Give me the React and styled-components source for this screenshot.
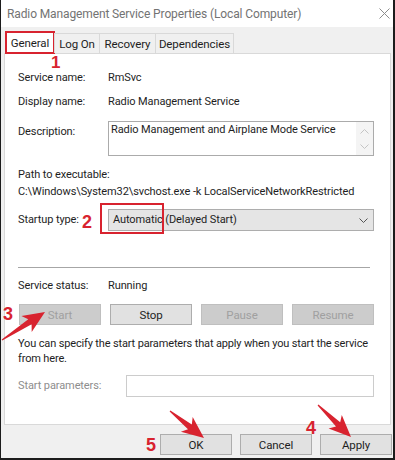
import React from "react";
import styled, { createGlobalStyle } from "styled-components";

const RED = "#d8232f";
const UI_FONT = `Roboto, "Liberation Sans", Arial, sans-serif`;

const GlobalStyle = createGlobalStyle`
  html, body {
    margin: 0;
    padding: 0;
    background: #fff;
  }
  body {
    font-family: ${UI_FONT};
  }
  * {
    box-sizing: border-box;
  }
`;

const tabs = [
  { name: "General", w: 50, selected: true },
  { name: "Log On", w: 46 },
  { name: "Recovery", w: 57 },
  { name: "Dependencies", w: 79 },
];

const serviceButtons = [
  { name: "Start", disabled: true },
  { name: "Stop" },
  { name: "Pause", disabled: true },
  { name: "Resume", disabled: true },
];

// tail -> tip, drawn as a tapered shaft with a swept head
const arrowPoints = (x1, y1, x2, y2) => {
  const len = Math.hypot(x2 - x1, y2 - y1);
  const dx = (x2 - x1) / len;
  const dy = (y2 - y1) / len;
  const nx = -dy;
  const ny = dx;
  const head = 18;
  const neckX = x2 - dx * head;
  const neckY = y2 - dy * head;
  const barbX = x2 - dx * (head + 4);
  const barbY = y2 - dy * (head + 4);
  const pt = (x, y) => `${x.toFixed(1)},${y.toFixed(1)}`;
  return [
    pt(x1 + nx * 0.6, y1 + ny * 0.6),
    pt(neckX + nx * 3, neckY + ny * 3),
    pt(barbX + nx * 9.5, barbY + ny * 9.5),
    pt(x2, y2),
    pt(barbX - nx * 9.5, barbY - ny * 9.5),
    pt(neckX - nx * 3, neckY - ny * 3),
    pt(x1 - nx * 0.6, y1 - ny * 0.6),
  ].join(" ");
};

const arrows = [
  [2, 340, 45, 312],
  [170, 411, 204, 438],
  [318, 405, 351, 437],
];

const marks = [
  { n: "1", x: 51, y: 54, size: 17 },
  { n: "2", x: 82, y: 213, size: 18 },
  { n: "3", x: 3, y: 305, size: 18 },
  { n: "4", x: 306, y: 419, size: 18 },
  { n: "5", x: 146, y: 436, size: 18 },
];

const Chevron = ({ up, color = "#c4c4c4" }) => (
  <svg width="9" height="5" viewBox="0 0 9 5">
    <path
      d={up ? "M0.5 4.5 L4.5 0.5 L8.5 4.5" : "M0.5 0.5 L4.5 4.5 L8.5 0.5"}
      fill="none"
      stroke={color}
      strokeWidth="1"
    />
  </svg>
);

const App = () => {
  return (
    <>
      <GlobalStyle />
      <Window>
        <TitleBar>
          <Title>Radio Management Service Properties (Local Computer)</Title>
          <svg width="11" height="11" viewBox="0 0 11 11">
            <path d="M0.5 0.5 L10.5 10.5 M10.5 0.5 L0.5 10.5" stroke="#8c8c8c" strokeWidth="1" />
          </svg>
        </TitleBar>

        <Body>
          <TabStrip>
            {tabs.map((t) => (
              <Tab key={t.name} $w={t.w} $selected={t.selected}>
                {t.name}
              </Tab>
            ))}
          </TabStrip>

          <Panel>
            <Row>
              <Label>Service name:</Label>
              <Value>RmSvc</Value>
            </Row>
            <Row $mt={8}>
              <Label>Display name:</Label>
              <Value>Radio Management Service</Value>
            </Row>
            <Row $mt={11} $align="start">
              <Label $pt={3}>Description:</Label>
              <DescBox>
                <DescText>Radio Management and Airplane Mode Service</DescText>
                <ScrollBar>
                  <Chevron up />
                  <Chevron />
                </ScrollBar>
              </DescBox>
            </Row>

            <PathBlock>
              <div>Path to executable:</div>
              <div>C:\Windows\System32\svchost.exe -k LocalServiceNetworkRestricted</div>
            </PathBlock>

            <Row $mt={9}>
              <Label>Startup type:</Label>
              <Select>
                <span>Automatic (Delayed Start)</span>
                <Chevron color="#555" />
                <AutoMark />
              </Select>
            </Row>

            <Separator />

            <Row $mt={10}>
              <Label>Service status:</Label>
              <Value>Running</Value>
            </Row>

            <ButtonRow>
              {serviceButtons.map((b) => (
                <ServiceButton key={b.name} $disabled={b.disabled}>
                  {b.name}
                </ServiceButton>
              ))}
            </ButtonRow>

            <Hint>
              You can specify the start parameters that apply when you start the service
              <br />
              from here.
            </Hint>

            <Row $mt={9} $label={108}>
              <Label $disabled>Start parameters:</Label>
              <ParamInput />
            </Row>
          </Panel>

          <Footer>
            <DialogButton>OK</DialogButton>
            <DialogButton>Cancel</DialogButton>
            <DialogButton>Apply</DialogButton>
          </Footer>
        </Body>

        <Annotations>
          <svg width="395" height="460" viewBox="0 0 395 460">
            {arrows.map((a, i) => (
              <polygon key={i} points={arrowPoints(...a)} fill={RED} />
            ))}
          </svg>
          {marks.map((m) => (
            <Mark key={m.n} $x={m.x} $y={m.y} $size={m.size}>
              {m.n}
            </Mark>
          ))}
        </Annotations>
      </Window>
    </>
  );
};

const Window = styled.div`
  position: relative;
  width: 395px;
  height: 460px;
  display: flex;
  flex-direction: column;
  background: #f0f0f0;
  border-left: 1px solid #1c1c1c;
  border-right: 2px solid #1c1c1c;
  border-bottom: 2px solid #1c1c1c;
  font-family: ${UI_FONT};
  font-size: 11px;
  letter-spacing: -0.1px;
  color: #1e1e1e;
  overflow: hidden;
`;

const TitleBar = styled.div`
  height: 27px;
  flex-shrink: 0;
  display: flex;
  align-items: center;
  justify-content: space-between;
  background: #fff;
  padding: 0 3px 0 6px;
`;

const Title = styled.div`
  font-size: 12px;
  letter-spacing: -0.12px;
  color: #737373;
`;

const Body = styled.div`
  flex: 1;
  display: flex;
  flex-direction: column;
  padding: 6px 2px 0 3px;
`;

const TabStrip = styled.div`
  height: 20px;
  display: flex;
  align-items: flex-end;
  padding-left: 1px;
  position: relative;
  z-index: 1;
`;

const Tab = styled.div`
  width: ${(p) => p.$w}px;
  height: ${(p) => (p.$selected ? 23 : 20)}px;
  margin-bottom: ${(p) => (p.$selected ? -1 : 0)}px;
  display: flex;
  align-items: center;
  justify-content: center;
  font-size: 11.5px;
  background: ${(p) => (p.$selected ? "#fff" : "#f0f0f0")};
  border: ${(p) => (p.$selected ? "none" : "1px solid #d9d9d9")};
  border-bottom: none;
  margin-left: ${(p) => (p.$selected ? 0 : -1)}px;
  box-shadow: ${(p) => (p.$selected ? `inset 0 0 0 2px ${RED}` : "none")};
  padding-top: ${(p) => (p.$selected ? 1 : 0)}px;
  white-space: nowrap;
`;

const Panel = styled.div`
  height: 372px;
  flex-shrink: 0;
  background: #fff;
  border: 1px solid #d9d9d9;
  padding: 16px 16px 0 13px;
`;

const Row = styled.div`
  display: grid;
  grid-template-columns: ${(p) => p.$label ?? 90}px 1fr;
  align-items: ${(p) => p.$align ?? "center"};
  margin-top: ${(p) => p.$mt ?? 0}px;
  line-height: 16px;
`;

const Label = styled.div`
  color: ${(p) => (p.$disabled ? "#8d8d8d" : "#1e1e1e")};
  padding-top: ${(p) => p.$pt ?? 0}px;
  white-space: nowrap;
`;

const Value = styled.div`
  white-space: nowrap;
`;

const DescBox = styled.div`
  height: 35px;
  display: flex;
  border: 1px solid #ababab;
  background: #fff;
`;

const DescText = styled.div`
  flex: 1;
  padding: 0 2px;
  line-height: 16px;
  white-space: nowrap;
`;

const ScrollBar = styled.div`
  width: 17px;
  display: flex;
  flex-direction: column;
  align-items: center;
  justify-content: space-between;
  padding: 7px 0 6px;
  background: #f4f4f4;
`;

const PathBlock = styled.div`
  margin-top: 10px;
  line-height: 17px;
  white-space: nowrap;
`;

const Select = styled.div`
  position: relative;
  height: 22px;
  display: flex;
  align-items: center;
  justify-content: space-between;
  padding: 0 5px 0 4px;
  background: #e5e5e5;
  border: 1px solid #adadad;
`;

const AutoMark = styled.span`
  position: absolute;
  left: -9px;
  top: -7px;
  width: 64px;
  height: 31px;
  border: 2px solid ${RED};
`;

const Separator = styled.div`
  width: 352px;
  height: 1px;
  margin-top: 36px;
  background: #a6a6a6;
`;

const ButtonRow = styled.div`
  display: grid;
  grid-template-columns: repeat(4, 1fr);
  gap: 9px;
  margin: 10px 0 0 1px;
`;

const ServiceButton = styled.div`
  height: 21px;
  display: flex;
  align-items: center;
  justify-content: center;
  font-size: 11.5px;
  background: ${(p) => (p.$disabled ? "#cccccc" : "#e1e1e1")};
  border: 1px solid ${(p) => (p.$disabled ? "#bfbfbf" : "#adadad")};
  color: ${(p) => (p.$disabled ? "#a0a0a0" : "#1e1e1e")};
`;

const Hint = styled.div`
  margin-top: 11px;
  line-height: 15px;
  white-space: nowrap;
  letter-spacing: -0.15px;
`;

const ParamInput = styled.div`
  height: 22px;
  border: 1px solid #cccccc;
  background: #fff;
`;

const Footer = styled.div`
  display: flex;
  justify-content: flex-end;
  gap: 8px;
  padding-top: 9px;
  margin-right: -1px;
`;

const DialogButton = styled.div`
  width: 72px;
  height: 21px;
  display: flex;
  align-items: center;
  justify-content: center;
  font-size: 11.5px;
  background: #e1e1e1;
  border: 1px solid #adadad;
`;

const Annotations = styled.div`
  position: absolute;
  left: -1px;
  top: 0;
  width: 395px;
  height: 460px;
  pointer-events: none;

  svg {
    display: block;
  }
`;

const Mark = styled.span`
  position: absolute;
  left: ${(p) => p.$x}px;
  top: ${(p) => p.$y}px;
  font-family: "Liberation Sans", Arial, sans-serif;
  font-weight: 700;
  font-size: ${(p) => p.$size}px;
  line-height: 1;
  letter-spacing: 0;
  color: ${RED};
`;

export default App;
